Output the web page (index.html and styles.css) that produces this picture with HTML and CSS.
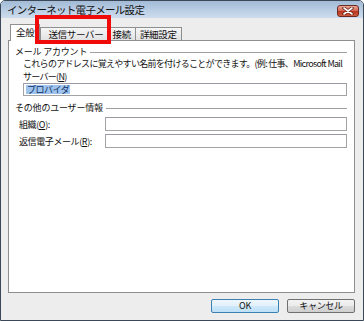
FILE: index.html
```html
<!DOCTYPE html>
<html lang="ja">
<head>
  <meta charset="UTF-8">
  <title>インターネット電子メール設定</title>
  <link rel="stylesheet" href="styles.css">
</head>
<body>
  <div class="window">
    <div class="titlebar">
      <span class="title">インターネット電子メール設定</span>
      <span class="close">
        <svg width="12" height="8" viewBox="0 0 12 8">
          <path d="M2 1 L10 7 M10 1 L2 7" stroke="#5a1a10" stroke-width="3.2" stroke-linecap="round"/>
          <path d="M2 1 L10 7 M10 1 L2 7" stroke="#ffffff" stroke-width="1.6" stroke-linecap="round"/>
        </svg>
      </span>
    </div>
    <div class="main">
      <div class="tabs">
        <div class="tab active">全般</div>
        <div class="tab marked">送信サーバー<span class="highlight"></span></div>
        <div class="tab">接続</div>
        <div class="tab">詳細設定</div>
      </div>
      <div class="panel">
        <div class="group-title"><span>メール アカウント</span><span class="rule"></span></div>
        <p class="desc">これらのアドレスに覚えやすい名前を付けることができます。(例: 仕事、Microsoft Mail<br>サーバー(<u>N</u>)</p>
        <div class="field wide"><span class="selected">プロバイダ</span></div>
        <div class="group-title second"><span>その他のユーザー情報</span><span class="rule"></span></div>
        <div class="row">
          <label>組織(<u>O</u>):</label>
          <div class="field"></div>
        </div>
        <div class="row">
          <label>返信電子メール(<u>R</u>):</label>
          <div class="field"></div>
        </div>
      </div>
      <div class="buttons">
        <button class="btn default">OK</button>
        <button class="btn">キャンセル</button>
      </div>
    </div>
  </div>
</body>
</html>
```

FILE: styles.css
```css
* {
  margin: 0;
  padding: 0;
  box-sizing: border-box;
}

body {
  font-family: "Noto Sans CJK JP", "Noto Sans", sans-serif;
  background: #ffffff;
}

.window {
  width: 364px;
  height: 321px;
  border: 1px solid #3b4857;
  border-radius: 5px 5px 0 0;
  display: flex;
  flex-direction: column;
  background: #ededed;
}

.titlebar {
  height: 17px;
  display: flex;
  align-items: center;
  justify-content: space-between;
  padding: 0 4px 0 6px;
  background: linear-gradient(#a3bbd6, #bcd0e6 60%, #cddcec);
  border-radius: 4px 4px 0 0;
}

.title {
  font-size: 10.5px;
  letter-spacing: -0.7px;
  color: #111;
  line-height: 12px;
}

.close {
  width: 22px;
  height: 12px;
  display: flex;
  align-items: center;
  justify-content: center;
  border: 1px solid #6b2a22;
  border-radius: 3px;
  background: linear-gradient(#eaa796, #d46a55 45%, #b8391f 55%, #cf5b3f);
  margin-top: 2px;
}

.main {
  flex: 1;
  display: flex;
  flex-direction: column;
  padding: 6px 8px 7px 7px;
}

.tabs {
  display: flex;
  align-items: flex-end;
  height: 16px;
  padding-left: 2px;
}

.tab {
  position: relative;
  height: 13px;
  padding: 0 4px;
  margin-left: -1px;
  font-size: 9.5px;
  letter-spacing: -0.3px;
  line-height: 12px;
  color: #111;
  border: 1px solid #8e8f8f;
  border-bottom: none;
  background: linear-gradient(#f6f6f6, #e2e2e2);
}

.tab.active {
  height: 17px;
  margin-bottom: -1px;
  margin-left: 0;
  padding: 0 5px;
  line-height: 15px;
  background: #ffffff;
  z-index: 1;
}

.tab.marked {
  margin-left: 0;
  padding: 0 4px 0 7px;
}

.highlight {
  position: absolute;
  left: -6px;
  right: -3px;
  top: -13px;
  bottom: -4px;
  border: 4px solid #f00a0a;
  z-index: 2;
}

.panel {
  flex: 1;
  background: #ffffff;
  border: 1px solid #8e8f8f;
  padding: 5px 7px 0 6px;
}

.group-title {
  display: flex;
  align-items: center;
  font-size: 9px;
  letter-spacing: -0.2px;
  line-height: 12px;
  color: #111;
}

.group-title .rule {
  flex: 1;
  height: 1px;
  margin-left: 3px;
  background: #a0a0a0;
}

.group-title.second {
  margin-top: 6px;
}

.desc {
  margin: -1px 0 0 8px;
  font-size: 9px;
  letter-spacing: -0.7px;
  line-height: 13px;
  color: #111;
}

.field {
  height: 14px;
  flex: 1;
  border: 1px solid #a3a3a3;
  border-top-color: #9a9aa4;
  background: #ffffff;
}

.field.wide {
  height: 13px;
  margin: 0 0 0 8px;
  padding: 1px 2px;
  display: flex;
  align-items: center;
}

.selected {
  font-size: 9px;
  letter-spacing: -0.5px;
  line-height: 9px;
  background: #9ec4ee;
  color: #0f2f66;
  padding: 0 1px;
}

.row {
  display: flex;
  align-items: center;
  margin: 3px 0 0 4px;
}

.row label {
  width: 86px;
  font-size: 9px;
  letter-spacing: -0.4px;
  color: #111;
}

.buttons {
  display: flex;
  justify-content: flex-end;
  gap: 8px;
  margin-top: 6px;
}

.btn {
  width: 68px;
  height: 14px;
  font-family: "Noto Sans CJK JP", "Noto Sans", sans-serif;
  font-size: 9px;
  letter-spacing: -0.3px;
  line-height: 12px;
  color: #111;
  border: 1px solid #707070;
  border-radius: 2px;
  background: linear-gradient(#f3f3f3, #ebebeb 50%, #dcdcdc 51%, #cfcfcf);
}

.btn.default {
  border-color: #3c7fb1;
  background: linear-gradient(#eef7fd, #e1f0fb 50%, #cde8f9 51%, #bfe0f7);
}
```
